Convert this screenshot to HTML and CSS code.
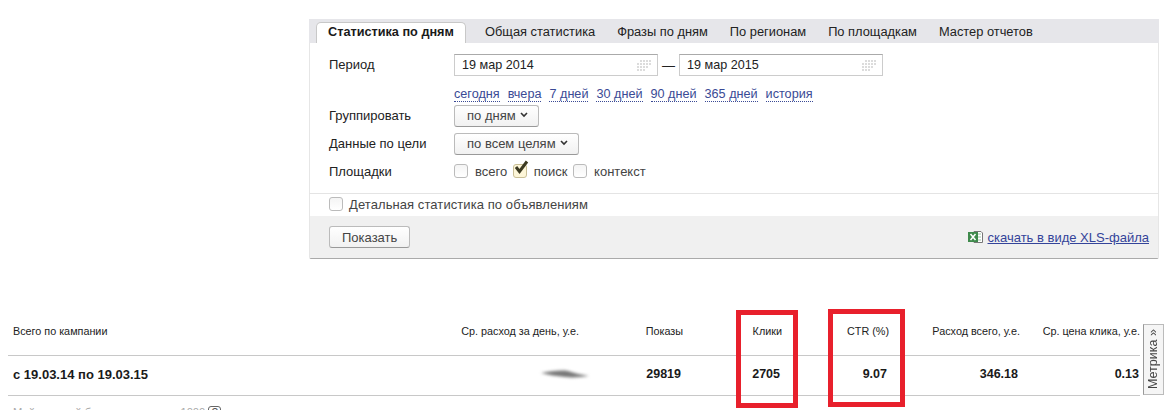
FILE: index.html
```html
<!DOCTYPE html>
<html lang="ru">
<head>
    <meta charset="UTF-8">
    <title>Статистика по кампании</title>
    <link rel="stylesheet" href="styles.css">
</head>
<body>
    <div class="report">
        <div class="tabs">
            <span class="tab tab-active">Статистика по дням</span>
            <span class="tab">Общая статистика</span>
            <span class="tab">Фразы по дням</span>
            <span class="tab">По регионам</span>
            <span class="tab">По площадкам</span>
            <span class="tab">Мастер отчетов</span>
        </div>

        <div class="form">
            <div class="row row-period">
                <span class="label">Период</span>
                <span class="date">19 мар 2014
                    <svg class="date-icon" width="16" height="12" viewBox="0 0 16 12"><path d="M5 1h2v2H5zM8 1h2v2H8zM11 1h2v2h-2zM14 1h2v2h-2zM2 4h2v2H2zM5 4h2v2H5zM8 4h2v2H8zM11 4h2v2h-2zM14 4h2v2h-2zM2 7h2v2H2zM5 7h2v2H5zM8 7h2v2H8zM11 7h2v2h-2zM2 10h2v2H2zM5 10h2v2H5zM8 10h2v2H8z" fill="#dcdcdc"/></svg>
                </span>
                <span class="dash">—</span>
                <span class="date">19 мар 2015
                    <svg class="date-icon" width="16" height="12" viewBox="0 0 16 12"><path d="M5 1h2v2H5zM8 1h2v2H8zM11 1h2v2h-2zM14 1h2v2h-2zM2 4h2v2H2zM5 4h2v2H5zM8 4h2v2H8zM11 4h2v2h-2zM14 4h2v2h-2zM2 7h2v2H2zM5 7h2v2H5zM8 7h2v2H8zM11 7h2v2h-2zM2 10h2v2H2zM5 10h2v2H5zM8 10h2v2H8z" fill="#dcdcdc"/></svg>
                </span>
            </div>
            <div class="row row-links">
                <span class="label"></span>
                <a class="range">сегодня</a>
                <a class="range">вчера</a>
                <a class="range">7 дней</a>
                <a class="range">30 дней</a>
                <a class="range">90 дней</a>
                <a class="range">365 дней</a>
                <a class="range">история</a>
            </div>
            <div class="row row-select">
                <span class="label">Группировать</span>
                <span class="btn btn-select">по дням
                    <svg width="8" height="6" viewBox="0 0 8 6"><path d="M1 1l3 3 3-3" fill="none" stroke="#333" stroke-width="1.6"/></svg>
                </span>
            </div>
            <div class="row row-select">
                <span class="label">Данные по цели</span>
                <span class="btn btn-select">по всем целям
                    <svg width="8" height="6" viewBox="0 0 8 6"><path d="M1 1l3 3 3-3" fill="none" stroke="#333" stroke-width="1.6"/></svg>
                </span>
            </div>
            <div class="row row-check">
                <span class="label">Площадки</span>
                <span class="check"></span><span class="check-text">всего</span>
                <span class="check check-on">
                    <svg class="tick" width="16" height="16" viewBox="0 0 16 16"><path d="M3 7l3.5 4.5L14 1.5" fill="none" stroke="#3c3a22" stroke-width="3"/></svg>
                </span><span class="check-text">поиск</span>
                <span class="check"></span><span class="check-text">контекст</span>
            </div>
        </div>

        <div class="detail">
            <span class="check"></span><span class="detail-text">Детальная статистика по объявлениям</span>
        </div>

        <div class="actions">
            <span class="btn btn-show">Показать</span>
            <span class="download">
                <svg width="16" height="14" viewBox="0 0 16 14"><path d="M6 1.5h7l1.5 1.5v9.5H6z" fill="#fff" stroke="#777"/><path d="M10 4h3M10 7h3M10 10h3" stroke="#9cc2a4"/><path d="M0 2h10v10H0z" fill="#3f8a4c"/><path d="M2.5 4l5 6M7.5 4l-5 6" stroke="#fff" stroke-width="1.5"/></svg>
                <a class="xls">скачать в виде XLS-файла</a>
            </span>
        </div>
    </div>

    <div class="totals">
        <div class="totals-row totals-head">
            <span class="cell-name">Всего по кампании</span>
            <span>Ср. расход за день, у.е.</span>
            <span>Показы</span>
            <span>Клики</span>
            <span>CTR (%)</span>
            <span>Расход всего, у.е.</span>
            <span>Ср. цена клика, у.е.</span>
        </div>
        <div class="totals-row totals-body">
            <span class="cell-name">с 19.03.14 по 19.03.15</span>
            <span>
                <svg class="smudge" width="54" height="14" viewBox="0 0 54 14"><path d="M3 6c10-2 20-3 27-2 6 2 14 4 21 5-8 1-16 2-24 1C19 9 10 8 3 6z" fill="#777"/></svg>
            </span>
            <span>29819</span>
            <span>2705</span>
            <span>9.07</span>
            <span>346.18</span>
            <span class="cell-last">0.13</span>
        </div>
        <div class="totals-note">Мой дневной бюджет кампании 1000 <span class="hint">?</span></div>

        <div class="mark mark-clicks"></div>
        <div class="mark mark-ctr"></div>
    </div>

    <div class="metrika">Метрика »</div>
</body>
</html>
```

FILE: styles.css
```css
html, body {
    height: 410px;
    overflow: hidden;
}
body {
    margin: 0;
    position: relative;
    background-color: #fff;
    color: #222;
    font-family: "Liberation Sans", Arial, sans-serif;
    font-size: 13px;
}

/* report form */
.report {
    width: 850px;
    margin: 19px 0 0 309px;
    box-sizing: border-box;
    border: 1px solid #e6e6e6;
    border-top: none;
    border-bottom: 1px solid #aaa;
    border-radius: 0 0 2px 2px;
    height: 240px;
}
.tabs {
    display: flex;
    height: 24px;
    margin: 0 -1px;
    padding-left: 7px;
    background-color: #e6e6ea;
    box-sizing: border-box;
    align-items: flex-end;
}
.tab {
    height: 21px;
    line-height: 19px;
    margin-right: 22px;
    white-space: nowrap;
    font-size: 12.85px;
}
.tab-active {
    width: 150px;
    box-sizing: border-box;
    padding-left: 11px;
    margin-right: 19px;
    background-color: #fff;
    border: 1px solid #c8c8c8;
    border-bottom: none;
    border-radius: 5px 5px 0 0;
    font-weight: bold;
    font-size: 12.7px;
    color: #1a1a1a;
}
.form {
    padding: 11px 0 0 19px;
    height: 150px;
    box-sizing: border-box;
}
.row {
    display: flex;
    align-items: center;
}
.label {
    width: 125px;
    flex: none;
}
.row-period .label,
.row-select .label {
    padding-bottom: 2px;
}
.row-period {
    height: 22px;
}
.date {
    width: 204px;
    height: 22px;
    box-sizing: border-box;
    border: 1px solid #ccc;
    border-top-color: #aaa;
    padding-left: 7px;
    line-height: 20px;
    display: flex;
    align-items: center;
    justify-content: space-between;
    padding-right: 6px;
    font-size: 12.6px;
}
.dash {
    width: 21px;
    text-align: center;
}
.row-links {
    height: 18px;
    margin-top: 9px;
    gap: 8px;
}
.row-links .label {
    margin-right: -8px;
}
.range {
    color: #3a4a95;
    border-bottom: 1px dotted #3a4a95;
    line-height: 14px;
    font-size: 12.65px;
}
.row-select {
    height: 22px;
    margin-top: 2px;
}
.row-select + .row-select {
    margin-top: 6px;
}
.btn {
    display: inline-flex;
    align-items: center;
    height: 22px;
    box-sizing: border-box;
    border: 1px solid #bbb;
    border-bottom-color: #999;
    border-radius: 3px;
    background: linear-gradient(#fff, #f1f1f1);
    color: #444;
}
.btn-select {
    padding: 0 10px 2px 12px;
    gap: 4px;
}
.row-check {
    height: 18px;
    margin-top: 7px;
}
.check {
    display: inline-block;
    position: relative;
    flex: none;
    width: 14px;
    height: 14px;
    box-sizing: border-box;
    border: 1px solid #bbb;
    border-radius: 3px;
    background: linear-gradient(#f4f4f4, #fff);
}
.check-on {
    background: #fdf6d8;
    border-color: #c9bf96;
}
.tick {
    position: absolute;
    left: -1px;
    top: -5px;
}
.check-text {
    margin: 0 5.6px 0 7px;
    color: #444;
}
.detail {
    height: 23px;
    margin: 0 -1px;
    border-top: 1px solid #e4e4e4;
    box-sizing: border-box;
    padding: 0 0 2px 20px;
    display: flex;
    align-items: center;
}
.detail-text {
    margin-left: 6px;
    letter-spacing: 0.08px;
    color: #444;
}
.actions {
    height: 42px;
    background-color: #f0f0f0;
    display: flex;
    align-items: center;
    justify-content: space-between;
    padding: 0 9px 0 19px;
}
.btn-show {
    padding: 0 12px;
}
.download {
    display: flex;
    align-items: center;
    gap: 4px;
}
.xls {
    color: #34449a;
    text-decoration: underline;
}

/* totals table */
.totals {
    margin: 60px 0 0 8px;
    width: 1132px;
    font-size: 10.8px;
}
.totals-row {
    display: grid;
    grid-template-columns: 300px 271px 104px 99px 107px 131px 120px;
    align-items: center;
    border-bottom: 1px solid #c8c8c8;
}
.totals-row span {
    text-align: right;
}
.totals-row .cell-name {
    text-align: left;
    padding-left: 5px;
}
.totals-head {
    height: 37px;
    padding-bottom: 13px;
    box-sizing: border-box;
    color: #222;
}
.totals-body {
    height: 40px;
    padding-bottom: 3px;
    box-sizing: border-box;
    font-size: 12.5px;
    font-weight: bold;
    color: #1a1a1a;
}
.totals-body span {
    padding-right: 2px;
}
.totals-body .cell-last {
    padding-right: 1px;
}
.totals-body .cell-name {
    font-size: 13px;
}
.smudge {
    display: block;
    margin-left: auto;
    margin-right: -15px;
    filter: blur(1.5px);
}
.totals-note {
    margin-top: 10px;
    padding-left: 5px;
    font-size: 11.2px;
    color: #aaa;
    white-space: nowrap;
}
.hint {
    display: inline-block;
    width: 11px;
    height: 11px;
    border: 1px solid #666;
    border-radius: 3px;
    text-align: center;
    line-height: 11px;
    color: #555;
}

/* red marks drawn over the table */
.mark {
    position: absolute;
    box-sizing: border-box;
    border: 5px solid #e8202c;
}
.mark-clicks {
    left: 736px;
    top: 310px;
    width: 62px;
    height: 98px;
}
.mark-ctr {
    left: 828px;
    top: 309px;
    width: 77px;
    height: 98px;
}

.metrika {
    position: absolute;
    left: 1143px;
    top: 324px;
    width: 21px;
    height: 71px;
    box-sizing: border-box;
    border: 1px solid #bbb;
    border-right-color: #999;
    background-color: #f5f5f5;
    writing-mode: vertical-rl;
    transform: rotate(180deg);
    text-align: center;
    line-height: 19px;
    font-size: 12.5px;
    color: #444;
}
```
